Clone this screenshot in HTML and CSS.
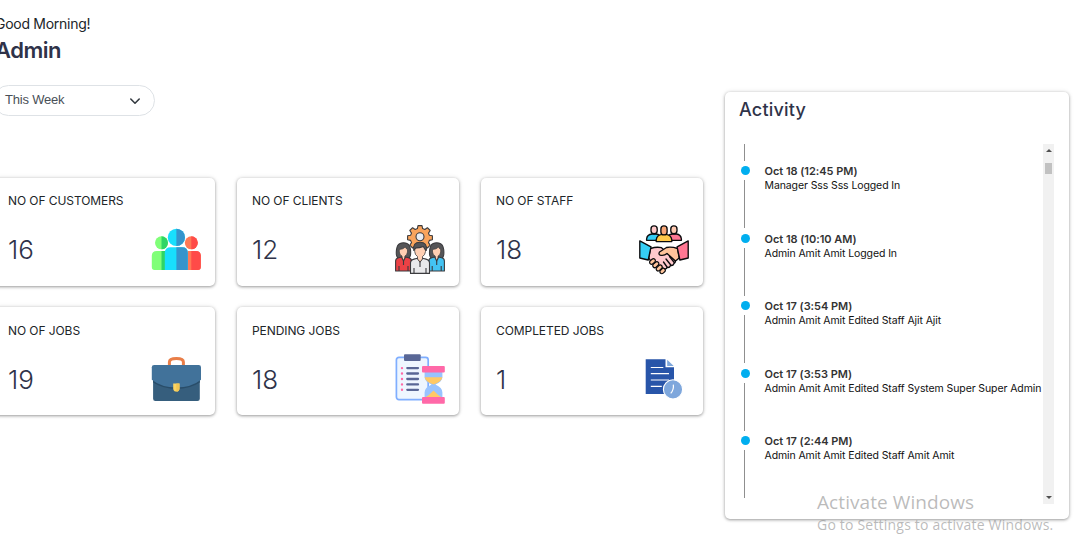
FILE: index.html
```html
<!DOCTYPE html>
<html lang="en">
<head>
<meta charset="utf-8">
<title>Dashboard</title>
<link rel="stylesheet" href="styles.css">
</head>
<body>
<div class="page">
  <main class="main">
    <p class="greeting">Good Morning!</p>
    <h1 class="name">Admin</h1>
    <div class="period"><span>This Week</span>
      <svg class="chevron" viewBox="0 0 12 12"><path d="M1.8 4 6 8.2 10.2 4"/></svg>
    </div>
    <section class="cards">
      <article class="card"><h2 class="label">NO OF CUSTOMERS</h2><div class="row"><span class="value">16</span>
        <svg class="icon" viewBox="-.5 0 50 50">
          <circle cx="10" cy="17.8" r="6.5" fill="#80ff78"/><path d="M10 11.3a6.5 6.5 0 0 1 0 13z" fill="#2fd565"/>
          <path d="M.3 31q0-5 5-5h8.5v19H3Q.3 45 .3 42z" fill="#80ff78"/><path d="M10 26h4v19h-4z" fill="#2fd565"/>
          <circle cx="39.8" cy="17.8" r="6.5" fill="#ff7956"/><path d="M39.8 11.3a6.5 6.5 0 0 1 0 13z" fill="#ff4b48"/>
          <path d="M36 26h8.3q5 0 5 5v11q0 3-3 3H36z" fill="#ff7956"/><path d="M39.8 26h4.5q5 0 5 5v11q0 3-3 3h-6.5z" fill="#ff4b48"/>
          <circle cx="24.9" cy="12.4" r="8.6" fill="#18dffd"/><path d="M24.9 3.8a8.6 8.6 0 0 1 0 17.2z" fill="#3594cc"/>
          <path d="M13.3 45V28q0-5.7 5.7-5.7h11.6q5.7 0 5.7 5.7v17z" fill="#18dffd"/><path d="M24.9 22.3h5.7q5.7 0 5.7 5.7v17H24.9z" fill="#3594cc"/>
        </svg></div></article>
      <article class="card"><h2 class="label">NO OF CLIENTS</h2><div class="row"><span class="value">12</span>
        <svg class="icon" viewBox="0 0 50 50" stroke="#3b3b3e" stroke-width="1.1" stroke-linejoin="round">
          <path fill="#f9a45c" d="M23 .6h4l.6 3 2.2.9 2.6-1.8 2.8 2.8-1.7 2.6.9 2.2 3 .5v4l-3 .6-.9 2.2 1.7 2.6-2.8 2.8-2.6-1.7-2.2.9-.6 3h-4l-.6-3-2.2-.9-2.6 1.7-2.8-2.8 1.7-2.6-.9-2.2-3-.6v-4l3-.5.9-2.2-1.7-2.6 2.8-2.8 2.6 1.8 2.2-.9z"/>
          <circle cx="25" cy="11.8" r="4" fill="#e9edf2"/>
          <path fill="#555558" d="M2.500 32.500C1 31 1.200 27 1.500 24.500C2 19 4.500 17.700 8.500 17.700s6.500 1.500 7 6.800c.3 3 .4 6.500-1 8z"/>
          <path fill="#ffcfb3" stroke-width=".7" d="M4.300 24.500q4-.2 6-2.500 1 2 2.200 2.500v2.500q-.4 3-2.600 4v3l-1.500 3L7 34v-3q-2.400-1-2.700-4z"/>
          <path fill="#ec4145" d="M.6 46V36q0-2.500 3-3.200L6.500 32l2 4 2-4 3 .8q3 .6 3 3.200v10z"/>
          <path d="M8.500 36v4M4 41v5M13 41v5" fill="none"/>
          <g transform="translate(33.200 0)"><path fill="#555558" d="M2.500 32.500C1 31 1.200 27 1.500 24.500C2 19 4.500 17.700 8.500 17.700s6.500 1.500 7 6.800c.3 3 .4 6.500-1 8z"/><path fill="#ffcfb3" stroke-width=".7" d="M4.300 24.500q4-.2 6-2.500 1 2 2.200 2.500v2.500q-.4 3-2.600 4v3l-1.500 3L7 34v-3q-2.400-1-2.700-4z"/><path fill="#43c3f3" d="M.6 46V36q0-2.500 3-3.200L6.500 32l2 4 2-4 3 .8q2.700.6 2.700 3.200v10z"/><path d="M8.500 36v4M4 41v5M13 41v5" fill="none"/></g>
          <path fill="#e9e9eb" d="M15.500 48.400V38q0-3 3.500-3.900l3.500-.9L25 37l2.500-3.800 3.500.9q3.500.9 3.500 3.900v10.400z"/>
          <path fill="#ffcfb3" stroke-width=".8" d="M19.700 23q5-.5 8-2l2.800 2v3.500q-.4 3.700-3 5v2.500L25 37l-2.500-3v-2.500q-2.500-1.300-2.800-5z"/>
          <path fill="#555558" d="M18.800 25.500q-1.300-8.300 6.200-8.300t6.300 8.300l-1.200-1-1.800-3q-3.500 1.500-7.600 1.500z"/><path d="M25 37v5M19 43v5M31 43v5" fill="none"/>
        </svg></div></article>
      <article class="card"><h2 class="label">NO OF STAFF</h2><div class="row"><span class="value">18</span>
        <svg class="icon" viewBox="0 0 50 50" stroke="#0b0b0d" stroke-width="1.350" stroke-linejoin="round" stroke-linecap="round">
          <path fill="#35cdf4" d="M7.600 15.300V14q.4-4.500 5.500-5h4q4.500.5 5 5v1.300z"/><path fill="#ff7793" d="M27.900 15.300V14q.4-4.500 5.500-5h4q4.500.5 5 5v1.300z"/>
          <rect x="12" y=".9" width="6.200" height="7.800" rx="3" fill="#ffc9c9"/><rect x="31.800" y=".9" width="6.200" height="7.800" rx="3" fill="#ffc9b0"/>
          <path fill="#ffc94a" d="M17.200 16.600V15q.5-5 5.800-5.600h4q5.300.6 5.800 5.600v1.600z"/>
          <rect x="21.900" y=".9" width="6.200" height="9" rx="3" fill="#f9a878"/>
          <path fill="#ffc9cd" d="M11.500 23.500q6-2 11-.8l13 11.700q2 2.500-.5 4-1 2.700-3.500 2-1 2.700-3.500 2-1 2.600-3.500 1L12 36.500 9.800 33z"/>
          <path fill="#ffc49b" d="M38.500 23.500q-6-2-11-1l-7 4.500q-1.500 2.700 1.500 3.300 3.500.5 6-1.800L36.500 36q2.500-2 3.700-3z"/>
          <g fill="#ffc49b" stroke-width="1.200"><rect x="-2" y="-3.200" width="4" height="6.400" rx="2" transform="translate(13.500 36.500) rotate(48)"/><rect x="-2" y="-3.400" width="4" height="6.800" rx="2" transform="translate(16.800 39.700) rotate(48)"/><rect x="-2" y="-3.400" width="4" height="6.800" rx="2" transform="translate(20.200 43) rotate(48)"/><rect x="-2" y="-3" width="4" height="6" rx="2" transform="translate(23.600 46) rotate(48)"/></g>
          <path fill="none" d="m27 34 4.800 6M30.500 31.500l4.800 6M24.500 37l3.500 5"/>
          <path fill="#35cdf4" d="m.8 15.800 11.200 6L9.200 35 .8 33z"/><path fill="#ff7793" d="m49.200 15.800-11.100 6L40.900 35l8.300-2z"/>
        </svg></div></article>
      <article class="card lower"><h2 class="label">NO OF JOBS</h2><div class="row"><span class="value">19</span>
        <svg class="icon" viewBox="-.5 0 50 50">
          <path d="M17.900 12V8q0-3.500 7-3.500t7 3.500v4" fill="none" stroke="#e97e48" stroke-width="3"/>
          <path d="M1.600 20h46.700v24.700q0 2.300-2.300 2.300H3.900q-2.300 0-2.300-2.300z" fill="#365e7d"/>
          <path d="M1.600 28.500q10 6.500 23.300 6.500t23.400-6.500V25H1.600z" fill="#294d69"/>
          <path d="M.3 13.300Q.3 11 2.600 11h44.600q2.300 0 2.300 2.300v12.500Q40 33.500 24.900 33.500T.3 25.800z" fill="#41729a"/>
          <path d="M21.700 29.400H28v4.800q0 3.400-3.150 3.400t-3.150-3.400z" fill="#fcd462"/><path d="M24.800 29.400H28v4.800q0 3.400-3.200 3.400z" fill="#f2c653"/>
        </svg></div></article>
      <article class="card lower"><h2 class="label">PENDING JOBS</h2><div class="row"><span class="value">18</span>
        <svg class="icon" viewBox="0 0 50 50">
          <rect x="1.400" y="3.400" width="31.800" height="42.200" rx="2.500" fill="#eef6ff" stroke="#7faeff" stroke-width="1.700"/>
          <rect x="9" y=".3" width="16.700" height="6.700" rx="1" fill="#596796"/>
          <path d="M12.300 14.100H23M12.300 19.500H23M12.300 25H23M12.300 30.400H23M12.300 35.800H23" stroke="#596796" stroke-width="2.300" stroke-linecap="round"/>
          <path d="M7 14.100h0M7 19.500h0M7 25h0M7 30.400h0M7 35.800h0" stroke="#ff6aa7" stroke-width="2.400" stroke-linecap="round"/>
          <path d="M29.600 18h17.800v5q0 4.500-7 7.500 7 3 7 8v5H29.600v-5q0-5 7-8-7-3-7-7.500z" fill="#98c3ff"/>
          <path d="M29.600 23.300h17.800q-.5 4.200-8.900 7.200-8.400-3-8.900-7.200z" fill="#ffc966"/><path d="M30 43.500q4-2 8.500-7 4.500 5 8.500 7z" fill="#ffc966"/>
          <rect x="27" y="12" width="22.800" height="6.500" rx="1" fill="#ff69a8"/><rect x="27" y="43.100" width="22.800" height="6.700" rx="1" fill="#ff69a8"/>
        </svg></div></article>
      <article class="card lower"><h2 class="label">COMPLETED JOBS</h2><div class="row"><span class="value">1</span>
        <svg class="icon" viewBox="0 0 50 50">
          <path d="M6.700 5.300h19.800v8H35v26.800H6.700z" fill="#2855a9"/><path d="m28.200 5.800 6.500 6.300h-6.500z" fill="#7ea7dc"/>
          <path d="M11.800 13.500h12.500M11.800 19.700H30M11.800 26H30M11.800 32.300h11" stroke="#fff" stroke-width="1.200"/>
          <circle cx="34" cy="35.400" r="9.600" fill="#7ea7dc" stroke="#fff" stroke-width="1.100"/><path d="M34.300 30.600q.8 5-2.600 8.700" stroke="#fff" stroke-width="1.200" fill="none"/>
        </svg></div></article>
    </section>
  </main>
  <aside class="activity">
    <h2 class="heading">Activity</h2>
    <div class="scroller">
      <ol class="timeline">
        <li class="event"><b class="date">Oct 18 (12:45 PM)</b><span class="text">Manager Sss Sss Logged In</span></li>
        <li class="event"><b class="date">Oct 18 (10:10 AM)</b><span class="text">Admin Amit Amit Logged In</span></li>
        <li class="event"><b class="date">Oct 17 (3:54 PM)</b><span class="text">Admin Amit Amit Edited Staff Ajit Ajit</span></li>
        <li class="event"><b class="date">Oct 17 (3:53 PM)</b><span class="text">Admin Amit Amit Edited Staff System Super Super Admin</span></li>
        <li class="event"><b class="date">Oct 17 (2:44 PM)</b><span class="text">Admin Amit Amit Edited Staff Amit Amit</span></li>
      </ol>
      <div class="scrollbar"><i class="up"></i><i class="thumb"></i><i class="down"></i></div>
    </div>
  </aside>
</div>
<div class="watermark"><p class="wm-title">Activate Windows</p><p class="wm-text">Go to Settings to activate Windows.</p></div>
</body>
</html>
```
FILE: styles.css
```css
* { box-sizing: border-box; }
body { margin: 0; height: 546px; overflow: hidden; background: #fff; color: #212529; font-family: Inter, "Liberation Sans", sans-serif; }
h1, h2, p, ol { margin: 0; padding: 0; }
.page { display: flex; gap: 22px; margin-left: -7px; align-items: flex-start; }
.main { width: 710px; flex: none; padding-top: 14px; }
.greeting { font-size: 14px; line-height: 20px; padding-left: 2px; letter-spacing: -.28px; }
.name { font-size: 22px; line-height: 30px; font-weight: 600; padding-left: 2px; margin-top: 1px; color: #2f3349; letter-spacing: -.5px; }
.period { display: flex; align-items: center; justify-content: space-between; width: 162px; height: 31px; margin-top: 20px; padding: 0 13px 2px 11px; border: 1px solid #dee2e6; border-radius: 16px; font: 13px/20px "Liberation Sans", sans-serif; letter-spacing: -.2px; color: #495057; }
.chevron { width: 12px; height: 12px; fill: none; stroke: #343a40; stroke-width: 1.6; stroke-linecap: round; stroke-linejoin: round; margin-top: 2px; }
.cards { display: grid; grid-template-columns: repeat(3, 222px); gap: 21px 22px; margin-top: 62px; }
.card { height: 108px; border-radius: 5px; padding: 15px 14px 0 15px; box-shadow: 0 1px 3px rgba(0,0,0,.34), 0 0 5px rgba(0,0,0,.12); }
.lower { padding-top: 16px; }
.lower .row { margin-top: 15px; }
.lower .value { padding-top: 2px; }
.label { font: 400 12px/16px Inter, sans-serif; color: #212529; white-space: nowrap; letter-spacing: -.08px; }
.row { display: flex; justify-content: space-between; align-items: center; margin-top: 16px; height: 50px; }
.value { font-size: 26px; line-height: 32px; font-weight: 350; color: #2f3349; }
.icon { width: 50px; height: 50px; flex: none; }
.activity { width: 344px; height: 427px; margin-top: 92px; padding: 5px 15px 0 14px; border-radius: 5px; box-shadow: 0 1px 3px rgba(0,0,0,.34), 0 0 5px rgba(0,0,0,.12); }
.heading { font-size: 18px; line-height: 26px; font-weight: 550; color: #2f3349; letter-spacing: .2px; }
.scroller { display: flex; height: 360px; margin-top: 21px; justify-content: space-between; }
.timeline { list-style: none; width: 304px; padding: 20px 0 0 25.500px; position: relative; }
.timeline::before { content: ""; position: absolute; left: 5px; top: 0; width: 1px; height: 17px; background: #8f8f8f; }
.event { height: 67.500px; position: relative; display: flex; flex-direction: column; white-space: nowrap; }
.event::before { content: ""; position: absolute; left: -24px; top: 2px; width: 9.400px; height: 9.400px; border-radius: 50%; background: #00aeef; }
.event::after { content: ""; position: absolute; left: -20.500px; top: 16px; width: 1px; height: 48px; background: #8f8f8f; }
.date { font-size: 11px; line-height: 14px; font-weight: 600; color: #333; letter-spacing: -.03px; }
.text { font-size: 10.500px; line-height: 14px; margin-top: 1px; color: #111; letter-spacing: -.1px; }
.scrollbar { width: 11px; background: #f1f1f1; display: flex; flex-direction: column; align-items: center; }
.up, .down { border: 3px solid transparent; }
.up { border-top: 0; border-bottom-color: #505050; margin-top: 5px; }
.thumb { width: 7px; height: 11px; background: #c1c1c1; margin-top: 11px; }
.down { border-bottom: 0; border-top-color: #505050; margin: auto 0 5px; }
.watermark { position: absolute; left: 817px; top: 489px; color: rgba(120,120,120,.5); font-family: "Open Sans", "Noto Sans", sans-serif; white-space: nowrap; }
.wm-title { font-size: 19px; line-height: 26px; letter-spacing: .08px; }
.wm-text { font-size: 14px; line-height: 20px; letter-spacing: .2px; }
```
